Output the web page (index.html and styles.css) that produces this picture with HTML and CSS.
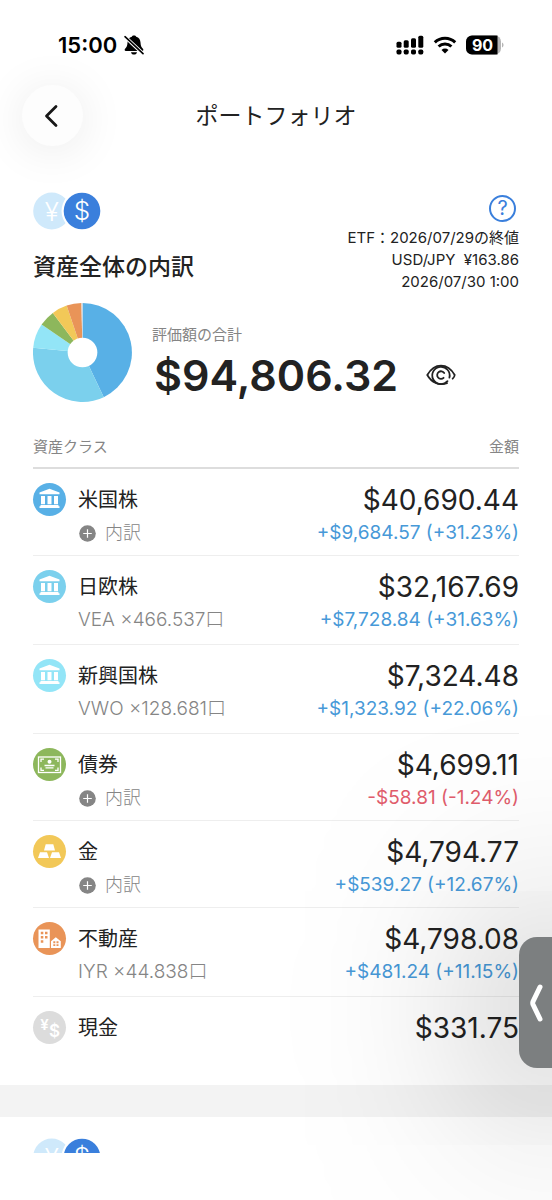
FILE: index.html
```html
<!DOCTYPE html>
<html lang="ja">
<head>
<meta charset="utf-8">
<meta name="viewport" content="width=device-width, initial-scale=1">
<title>ポートフォリオ</title>
<link rel="stylesheet" href="styles.css">
</head>
<body>
<svg class="sprite" aria-hidden="true">
  <symbol id="bank" viewBox="0 0 33 33">
    <path fill="#fff" d="M16.500 5.800 26.500 9.500V11.300H6.500V9.500ZM8 13H12V21.300H8ZM14.500 13H18.500V21.300H14.500ZM21 13H25V21.300H21ZM7.500 22H25.500V23.200H26.500V25H6.500V23.200H7.500Z"/>
  </symbol>
  <symbol id="plus" viewBox="0 0 17 17">
    <circle cx="8.500" cy="8.500" r="8.300" fill="#858585"/>
    <path d="M8.500 4.200V12.800M4.200 8.500H12.800" stroke="#fff" stroke-width="1.200"/>
  </symbol>
</svg>

<div class="status">
  <div class="status-side">
    <span class="clock">15:00</span>
    <svg width="20" height="20" viewBox="0 0 20 20" aria-hidden="true">
      <path d="M10 .5c1.200 0 1.900.5 2.200 1.300 2.700.8 4.200 2.900 4.300 5.700.1 3.300.8 4.500 2.400 6.300.9 1 .5 2.200-.8 2.200H1.900c-1.300 0-1.700-1.200-.8-2.200 1.600-1.800 2.300-3 2.400-6.300.1-2.800 1.600-4.900 4.300-5.700C8.100 1 8.800.5 10 .5ZM7 17.300h6c-.3 1.500-1.400 2.300-3 2.300s-2.700-.8-3-2.300Z"/>
      <path d="M1 1.700 19 18.700" stroke="#fff" stroke-width="3.600"/>
      <path d="M1 1.700 19 18.700" stroke="#000" stroke-width="1.600" stroke-linecap="round"/>
    </svg>
  </div>
  <div class="status-side status-icons">
    <svg width="28" height="20" viewBox="0 0 28 20" aria-hidden="true">
      <rect x=".5" y="6.800" width="5" height="6" rx="1.500"/><rect x="7.700" y="5.300" width="5" height="7.500" rx="1.500"/><rect x="15" y="3.300" width="5" height="9.500" rx="1.500"/><rect x="22.300" y=".8" width="5" height="12" rx="1.500"/>
      <rect x=".5" y="14.500" width="5" height="5" rx="1.700"/><rect x="7.700" y="14.500" width="5" height="5" rx="1.700"/><rect x="15" y="14.500" width="5" height="5" rx="1.700"/><rect x="22.300" y="14.500" width="5" height="5" rx="1.700"/>
    </svg>
    <svg width="24" height="18" viewBox="0 0 24 18" aria-hidden="true">
      <path d="M1.800 6.400a14.600 14.600 0 0 1 20.400 0M5.600 10.500a9.200 9.200 0 0 1 12.800 0" fill="none" stroke="#000" stroke-width="3"/>
      <path d="M12 17.500 8.500 13.900a5 5 0 0 1 7 0Z"/>
    </svg>
    <svg width="38" height="20" viewBox="0 0 38 20" role="img" aria-label="90%">
      <rect width="35" height="19" y=".5" rx="6" fill="#b5b5b5"/>
      <path d="M6 .5H31.500V19.500H6a6 6 0 0 1-6-6v-7a6 6 0 0 1 6-6Z"/>
      <path d="M36 7.500c2 .8 2 4.200 0 5Z" fill="#b5b5b5"/>
      <text class="battery-text" x="16.500" y="15.500">90</text>
    </svg>
  </div>
</div>

<header class="header">
  <button class="back" type="button" aria-label="戻る">
    <svg width="14" height="24" viewBox="0 0 14 24" aria-hidden="true"><path d="M12 2.500 2.500 12 12 21.500" fill="none" stroke="#171717" stroke-width="2.800" stroke-linecap="round" stroke-linejoin="round"/></svg>
  </button>
  <h1>ポートフォリオ</h1>
</header>

<main class="content">
  <section class="summary">
    <div class="intro">
      <div>
        <svg class="coins" viewBox="0 0 68 38" aria-hidden="true">
          <circle cx="18.700" cy="19" r="18.500" fill="#cfe9fb"/>
          <text class="coin-sign" x="18.700" y="29">¥</text>
          <circle cx="49" cy="19" r="20.500" fill="#fff"/>
          <circle cx="49" cy="19" r="18.300" fill="#3a7fdc"/>
          <text class="coin-sign" x="49" y="28">$</text>
        </svg>
        <h2>資産全体の内訳</h2>
      </div>
      <div class="rates">
        <button class="help" type="button" aria-label="ヘルプ">?</button>
        <p>ETF：2026/07/29の終値</p>
        <p>USD/JPY&nbsp; ¥163.86</p>
        <p>2026/07/30 1:00</p>
      </div>
    </div>
    <div class="total">
      <svg class="pie" viewBox="-50 -50 100 100" role="img" aria-label="資産配分">
        <path fill="#58b0e6" d="M0 0V-50A50 50 0 0 1 21.500 45.100Z"/>
        <path fill="#7bd0ed" d="M0 0 21.500 45.100A50 50 0 0 1-49.800-4.700Z"/>
        <path fill="#93e5f7" d="M0 0-49.800-4.700A50 50 0 0 1-41.300-28.200Z"/>
        <path fill="#8db75c" d="M0 0-41.300-28.200A50 50 0 0 1-30-40Z"/>
        <path fill="#f2c858" d="M0 0-30-40A50 50 0 0 1-16-47.400Z"/>
        <path fill="#e99458" d="M0 0-16-47.400A50 50 0 0 1-1.100-50Z"/>
        <path fill="#d9d9d9" d="M0 0-1.100-50H0Z"/>
        <circle r="15" fill="#fff"/>
      </svg>
      <div class="total-text">
        <p class="caption">評価額の合計</p>
        <div class="total-line">
          <strong>$94,806.32</strong>
          <button class="eye" type="button" aria-label="金額を隠す">
            <svg width="30" height="22" viewBox="0 0 30 22" fill="none" stroke="#222" stroke-width="1.800" stroke-linecap="round" aria-hidden="true">
              <path d="M21 19.200C13 22 5.500 18.500 1.300 11 5 4.500 9.500 1.600 15 1.600S25 4.500 28.700 11c-.2 1.500-.9 2.700-2 3.700"/>
              <path d="M21.500 17.200A8.700 8.700 0 1 1 23.400 13.600"/>
              <path d="M17.600 13.800A3.800 3.800 0 1 1 18.200 9"/>
            </svg>
          </button>
        </div>
      </div>
    </div>
    <table class="assets">
      <thead><tr><th scope="col">資産クラス</th><th scope="col">金額</th></tr></thead>
      <tbody>
        <tr>
          <td><div class="asset"><svg class="badge us"><use href="#bank"/></svg><div><p class="name">米国株</p><button class="detail" type="button"><svg><use href="#plus"/></svg>内訳</button></div></div></td>
          <td><p class="amount">$40,690.44</p><p class="gain">+$9,684.57 (+31.23%)</p></td>
        </tr>
        <tr class="fund">
          <td><div class="asset"><svg class="badge eu"><use href="#bank"/></svg><div><p class="name">日欧株</p><p class="units">VEA ×466.537口</p></div></div></td>
          <td><p class="amount">$32,167.69</p><p class="gain">+$7,728.84 (+31.63%)</p></td>
        </tr>
        <tr class="fund">
          <td><div class="asset"><svg class="badge em"><use href="#bank"/></svg><div><p class="name">新興国株</p><p class="units">VWO ×128.681口</p></div></div></td>
          <td><p class="amount">$7,324.48</p><p class="gain">+$1,323.92 (+22.06%)</p></td>
        </tr>
        <tr>
          <td><div class="asset"><svg class="badge bond" viewBox="0 0 33 33">
            <rect x="5.500" y="9" width="22" height="15.500" fill="none" stroke="#fff" stroke-width="1.300"/>
            <path d="M8 14V11.200H11M22 11.200H25V14M25 19.500V22.300H22M11 22.300H8V19.500M11.500 17.500H21.500M12.500 19.800H20.500" fill="none" stroke="#fff" stroke-width="1.300"/>
            <circle cx="16.500" cy="13.800" r="2" fill="#fff"/>
          </svg><div><p class="name">債券</p><button class="detail" type="button"><svg><use href="#plus"/></svg>内訳</button></div></div></td>
          <td><p class="amount">$4,699.11</p><p class="gain loss">-$58.81 (-1.24%)</p></td>
        </tr>
        <tr>
          <td><div class="asset"><svg class="badge gold" viewBox="0 0 33 33">
            <path fill="#fff" d="M12.700 9.200H20.300L22 15.500H11ZM7 17.200H14L16 23H5ZM19 17.200H26L28 23H17Z"/>
          </svg><div><p class="name">金</p><button class="detail" type="button"><svg><use href="#plus"/></svg>内訳</button></div></div></td>
          <td><p class="amount">$4,794.77</p><p class="gain">+$539.27 (+12.67%)</p></td>
        </tr>
        <tr class="fund">
          <td><div class="asset"><svg class="badge estate" viewBox="0 0 33 33">
            <path fill="#fff" d="M5.500 7.500H16.800V26H5.500ZM18 19.200 22.800 15.200 27.800 19.200V26H18Z"/>
            <path fill="#e99458" d="M7.800 9.800H10.300V12.300H7.800ZM12 9.800H14.500V12.300H12ZM7.800 14H10.300V16.500H7.800ZM12 14H14.500V16.500H12ZM7.800 18.300H10.300V20.800H7.800ZM20.300 19.300H22.300V21.200H20.300ZM23.500 19.300H25.500V21.200H23.500ZM20.300 22.300H22.300V24H20.300ZM23.500 22.300H25.500V24H23.500Z"/>
          </svg><div><p class="name">不動産</p><p class="units">IYR ×44.838口</p></div></div></td>
          <td><p class="amount">$4,798.08</p><p class="gain">+$481.24 (+11.15%)</p></td>
        </tr>
        <tr class="cash">
          <td><div class="asset"><svg class="badge money" viewBox="0 0 33 33">
            <text class="money-sign" x="11.500" y="18.500" font-size="15">¥</text>
            <text class="money-sign" x="21.500" y="25.500" font-size="17">$</text>
          </svg><p class="name">現金</p></div></td>
          <td><p class="amount">$331.75</p></td>
        </tr>
      </tbody>
    </table>
  </section>
  <section class="next">
    <svg class="coins" viewBox="0 0 68 38" aria-hidden="true">
      <circle cx="18.700" cy="19" r="18.500" fill="#cfe9fb"/>
      <text class="coin-sign" x="18.700" y="29">¥</text>
      <circle cx="49" cy="19" r="20.500" fill="#fff"/>
      <circle cx="49" cy="19" r="18.300" fill="#3a7fdc"/>
      <text class="coin-sign" x="49" y="28">$</text>
    </svg>
  </section>
</main>
<button class="drawer" type="button" aria-label="パネルを開く">
  <svg width="14" height="38" viewBox="0 0 14 38" aria-hidden="true"><path d="M11 3 4 17.500Q3.500 19 4 20.500L11 35" fill="none" stroke="#fff" stroke-width="5" stroke-linecap="round" stroke-linejoin="round"/></svg>
</button>
</body>
</html>
```
FILE: styles.css
```css
* { box-sizing: border-box; }

body {
  margin: 0;
  height: 100vh;
  padding-bottom: 47px;
  display: flex;
  flex-direction: column;
  overflow: hidden;
  background: #fff;
  color: #222;
  font-family: Inter, "Noto Sans CJK JP", sans-serif;
}

h1, h2, p { margin: 0; }

button {
  padding: 0;
  border: 0;
  background: none;
  color: inherit;
  font: inherit;
  cursor: pointer;
}

svg { display: block; flex: none; }

.sprite { position: absolute; width: 0; height: 0; }

.status {
  flex: none;
  display: flex;
  justify-content: space-between;
  padding: 32px 48px 0 58px;
  color: #000;
}

.status-side { display: flex; align-items: center; gap: 7px; height: 26px; }
.status-icons { gap: 9px; }
.clock { font-size: 22px; font-weight: 600; }

.battery-text {
  fill: #fff;
  font-size: 16px;
  font-weight: 700;
  text-anchor: middle;
}

.header {
  flex: none;
  display: grid;
  grid-template-columns: 61px 1fr 61px;
  align-items: center;
  padding: 27px 22px 0;
}

.header h1 {
  font-size: 23px;
  font-weight: 400;
  line-height: 34px;
  text-align: center;
}

.back {
  display: grid;
  place-items: center;
  width: 61px;
  height: 61px;
  padding-right: 4px;
  border-radius: 50%;
  background: #fdfdfd;
  box-shadow: 0 4px 48px rgba(0, 0, 0, .09);
}

.content { flex: 1; min-height: 0; overflow: hidden; padding-top: 46px; }
.summary { padding: 0 33px; }

.coins { width: 68px; height: 38px; }
.coin-sign {
  fill: #fff;
  font-family: Inter, sans-serif;
  font-size: 26px;
  font-weight: 300;
  text-anchor: middle;
}

.intro { display: flex; justify-content: space-between; }
.intro h2 { margin-top: 20px; font-size: 23px; font-weight: 500; line-height: 34px; }

.rates {
  display: flex;
  flex-direction: column;
  align-items: flex-end;
  padding-top: 3px;
  font-size: 15px;
  line-height: 22px;
}

.help {
  width: 27px;
  height: 27px;
  margin: 0 3px 5px 0;
  border: 2px solid #3a7fdc;
  border-radius: 50%;
  color: #3a7fdc;
  font-size: 20px;
  line-height: 23px;
}

.total { display: flex; align-items: flex-start; gap: 20px; margin-top: 10px; }
.pie { width: 99px; height: 99px; }
.total-text { padding-top: 21px; }
.caption { color: #858585; font-size: 15px; line-height: 22px; }
.total-line { display: flex; align-items: center; gap: 28px; }
.total-line strong { padding-left: 2px; font-size: 43px; font-weight: 600; line-height: 58px; }

.assets { width: 100%; margin-top: 32px; border-collapse: collapse; }
.assets th {
  padding: 0 0 9px;
  border-bottom: 2px solid #ddd;
  color: #858585;
  font-size: 15px;
  font-weight: 400;
  line-height: 22px;
  text-align: left;
}
.assets td {
  padding: 14px 0 6px;
  border-bottom: 1px solid #eee;
  vertical-align: top;
}
.assets th:last-child,
.assets td:last-child { text-align: right; }
.assets .fund td { padding-bottom: 8px; }
.assets .cash td { padding-bottom: 40px; border: 0; }

.asset { display: flex; gap: 12px; }
.badge { width: 33px; height: 33px; border-radius: 50%; }
.us { background: #58b0e6; }
.eu { background: #7bd0ed; }
.em { background: #93e5f7; }
.bond { background: #8db75c; }
.gold { background: #f2c858; }
.estate { background: #e99458; }
.money { background: #dcdcdc; }
.money-sign { fill: #fff; font-weight: 600; text-anchor: middle; }

.name { font-size: 20px; line-height: 34px; }
.amount { font-size: 28px; line-height: 34px; }
.units, .gain { font-size: 19px; line-height: 32px; }
.detail { font-size: 18px; line-height: 32px; }
.units, .detail { color: #858585; font-weight: 300; }
.gain { color: #4799d8; }
.loss { color: #e15d6c; }

.detail { display: flex; align-items: center; gap: 9px; padding-left: 1px; }
.detail svg { width: 17px; height: 17px; }

.next { padding: 21px 33px 0; border-top: 32px solid #f3f3f3; }

/* Pull-out handle floating over the right edge */
.drawer {
  position: fixed;
  top: 937px;
  right: 0;
  display: grid;
  place-items: center;
  width: 33px;
  height: 131px;
  border-radius: 18px 0 0 18px;
  background: #7c7f80;
  box-shadow: 20px 8px 190px 24px rgba(0, 0, 0, .5);
}
```
